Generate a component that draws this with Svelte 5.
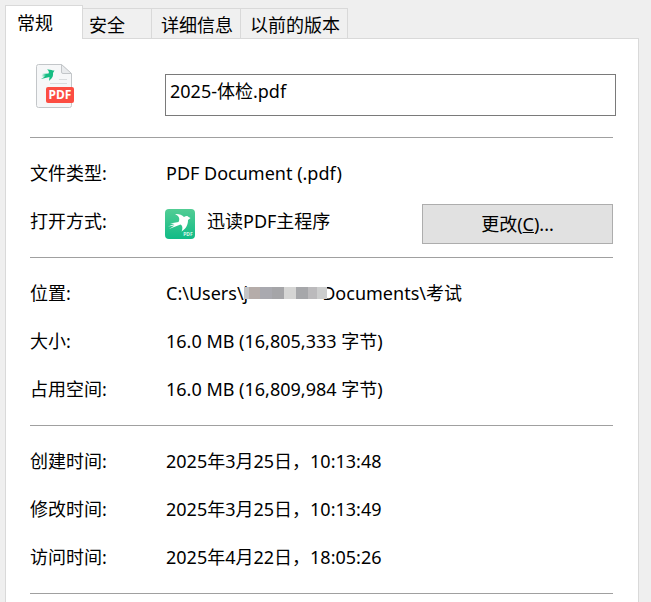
<script lang="ts">
  type Row = { label: string; value: string };

  const tabs = ["常规", "安全", "详细信息", "以前的版本"];

  const sizes: Row[] = [
    { label: "大小:", value: "16.0 MB (16,805,333 字节)" },
    { label: "占用空间:", value: "16.0 MB (16,809,984 字节)" }
  ];

  const dates: Row[] = [
    { label: "创建时间:", value: "2025年3月25日，10:13:48" },
    { label: "修改时间:", value: "2025年3月25日，10:13:49" },
    { label: "访问时间:", value: "2025年4月22日，18:05:26" }
  ];

  // blocks that hide the user name in the path
  const blocks = [
    { width: 5, color: "#c4c4c5" },
    { width: 11, color: "#b5aca9" },
    { width: 12, color: "#a9a9af" },
    { width: 12, color: "#a5a5a8" },
    { width: 12, color: "#d5d5d4" },
    { width: 12, color: "#a6a7aa" },
    { width: 9, color: "#bbbabc" },
    { width: 10, color: "#cccdcd" }
  ];

  let active = $state(0);
  let fileName = $state("2025-体检.pdf");
</script>

{#snippet row(item: Row)}
  <div class="row">
    <dt>{item.label}</dt>
    <dd>{item.value}</dd>
  </div>
{/snippet}

<main class="sheet">
  <div class="tabs" role="tablist">
    {#each tabs as tab, i}
      <button
        class="tab"
        class:active={active === i}
        role="tab"
        aria-selected={active === i}
        onclick={() => (active = i)}
      >
        {tab}
      </button>
    {/each}
  </div>

  <div class="panel" role="tabpanel">
    <div class="head">
      <svg class="file-icon" viewBox="0 0 38 44" aria-hidden="true">
        <path
          d="M2.500 .5H25.500L35.500 10V41.500Q35.500 43.500 33.500 43.500H2.500Q.5 43.500 .5 41.500V2.500Q.5 .5 2.500 .5Z"
          fill="#f6f7f8"
          stroke="#c3c6c9"
        />
        <path d="M25.500 .5V8Q25.500 9.500 27 9.500H35.500Z" fill="#e9ebed" stroke="#c3c6c9" />
        <path d="M23 15.500h8M14 19.500h17" stroke="#d9dcde" />
        <path
          d="M11 5.500C14.500 5 17 7 18.500 6.500L17 9C17.500 13 15.500 14.500 13 17L13.500 13L5 15L9 12.500L5.500 12L10 11L6 10L12.500 9.500C13.500 8 12.500 6.500 11 5.500Z"
          fill="#16bd83"
        />
        <rect x="10" y="23" width="28" height="16" rx="2" fill="#fc4d42" />
        <text x="24" y="35" text-anchor="middle" class="file-type">PDF</text>
      </svg>
      <input class="name" type="text" aria-label="文件名" bind:value={fileName} />
    </div>

    <dl class="group">
      {@render row({ label: "文件类型:", value: "PDF Document (.pdf)" })}
      <div class="row">
        <dt>打开方式:</dt>
        <dd class="opener">
          <svg class="app-icon" viewBox="0 0 30 30" aria-hidden="true">
            <defs>
              <linearGradient id="app-fill" x1="0" y1="0" x2="0" y2="1">
                <stop offset="0" stop-color="#52cd94" />
                <stop offset="1" stop-color="#10bb86" />
              </linearGradient>
            </defs>
            <rect width="30" height="30" rx="4" fill="url(#app-fill)" />
            <path
              d="M10 5C13 4.500 17 5.500 19 8C21 6.500 23 6.500 23.500 8L25.500 9L23 11C23 15.500 21.500 19.500 16.500 22.500C18 19.500 17.500 16.500 15.500 15.500L4 20L9.500 16.500L3 17.500L9.500 15L5 14.500L13.500 13C15.500 9.500 13.500 6.500 10 5Z"
              fill="#fff"
            />
            <text x="23" y="27" text-anchor="middle" class="app-tag">PDF</text>
          </svg>
          <span>迅读PDF主程序</span>
          <button class="change">更改(<u>C</u>)...</button>
        </dd>
      </div>
    </dl>

    <dl class="group">
      <div class="row">
        <dt>位置:</dt>
        <dd class="path">
          <span>C:\Users\j</span>
          <span class="mosaic">
            {#each blocks as block}
              <i style={`width:${block.width}px; background:${block.color};`}></i>
            {/each}
          </span>
          <span>Documents\考试</span>
        </dd>
      </div>
      {#each sizes as item}
        {@render row(item)}
      {/each}
    </dl>

    <dl class="group">
      {#each dates as item}
        {@render row(item)}
      {/each}
    </dl>
  </div>
</main>

<style>
  :global(body) {
    margin: 0;
    background: #efefef;
  }

  .sheet {
    box-sizing: border-box;
    display: flex;
    flex-direction: column;
    min-height: 100vh;
    padding: 5px 12px 0 5px;
    font: 18px/24px "Noto Sans", "Noto Sans CJK SC", sans-serif;
    color: #000;
  }

  button,
  input {
    box-sizing: border-box;
    border-radius: 0;
    font: inherit;
    color: inherit;
  }

  .tabs {
    display: flex;
    align-items: flex-end;
  }

  .tab {
    height: 30px;
    min-width: 69px;
    padding: 2px 7px 0 9px;
    border: 1px solid #d9d9d9;
    border-width: 1px 1px 0 0;
    background: #f0f0f0;
    text-align: left;
    white-space: nowrap;
  }

  .tab:nth-child(2) {
    padding-left: 6px;
  }

  .tab.active {
    z-index: 1;
    height: 34px;
    min-width: 78px;
    margin-bottom: -1px;
    padding: 0 11px;
    border-left-width: 1px;
    background: #fff;
  }

  .panel {
    flex: 1;
    padding: 0 25px 0 24px;
    border: 1px solid #d9d9d9;
    border-bottom: 0;
    background: #fff;
  }

  .head {
    display: grid;
    grid-template-columns: 135px 1fr;
    padding: 25px 0 21px;
    border-bottom: 1px solid #a0a0a0;
  }

  .file-icon {
    width: 38px;
    height: 44px;
    margin-left: 6px;
  }

  .file-type {
    font: 700 12px "Noto Sans", sans-serif;
    fill: #fff;
  }

  .name {
    height: 42px;
    margin: 10px -3px 0 0;
    padding: 0 4px 11px;
    border: 1px solid #7a7a7a;
    background: #fff;
  }

  .group {
    margin: 0;
    padding: 11px 0 12px;
    border-bottom: 1px solid #a0a0a0;
  }

  .row {
    display: grid;
    grid-template-columns: 136px 1fr;
    align-items: center;
    height: 48px;
  }

  dd {
    margin: 0;
    white-space: nowrap;
  }

  .opener,
  .path {
    display: flex;
    align-items: center;
  }

  .app-icon {
    width: 30px;
    height: 30px;
    margin: 5px 12px 0 -1px;
  }

  .app-tag {
    font: 700 5px "Noto Sans", sans-serif;
    fill: #d4f4e7;
  }

  .change {
    width: 191px;
    height: 40px;
    margin: 5px 0 0 auto;
    padding: 0;
    border: 1px solid #adadad;
    background: #e1e1e1;
  }

  .mosaic {
    z-index: 1;
    display: flex;
    height: 12px;
    margin: 0 -5px 0 -4px;
  }
</style>
